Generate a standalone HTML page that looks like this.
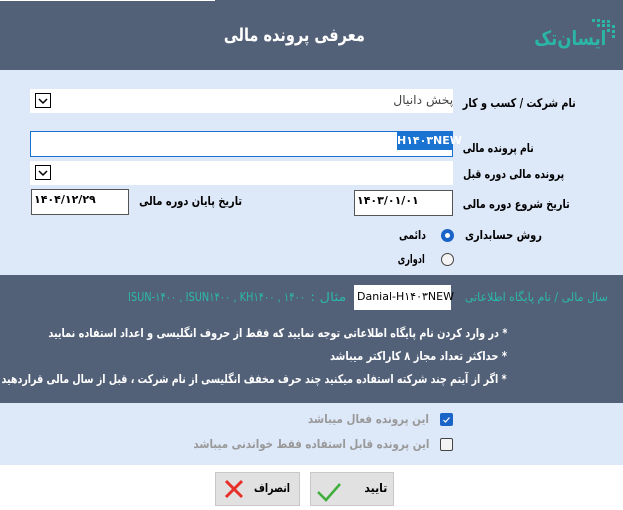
<!DOCTYPE html>
<html><head><meta charset="utf-8"><style>
*{margin:0;padding:0;box-sizing:border-box}
body{width:623px;height:510px;position:relative;background:#fff;font-family:"DejaVu Sans","Liberation Sans",sans-serif;overflow:hidden}
.a{position:absolute;white-space:nowrap}
.f{direction:rtl;text-align:right;font-size:12px;font-weight:bold;color:#000;line-height:16px}
.f>span{display:inline-block;transform-origin:right center}
.box{position:absolute;background:#fff}
.dd{position:absolute;width:16px;height:15px;border:1.5px solid #000;background:#fff}
</style></head><body>
<div class="a" style="left:0;top:0;width:623px;height:70px;background:#536178"></div>
<div class="a" style="left:0;top:0;width:215px;height:1px;background:#fff"></div>
<div class="a f" style="left:224px;top:25px;width:141px;color:#fff;font-size:18px;line-height:22px">معرفی پرونده مالی</div>
<svg class="a" style="left:530px;top:16px" width="90" height="40" viewBox="0 0 90 40">
<g fill="#2ab5a5"><rect x="62" y="3" width="3" height="3"/><rect x="67" y="3" width="3" height="3"/><rect x="72" y="4" width="3" height="3"/><rect x="77" y="4" width="3" height="3"/><rect x="67" y="8" width="3" height="3"/><rect x="72" y="8" width="3" height="3"/><rect x="77" y="8" width="3" height="3"/><rect x="82" y="9" width="3" height="3"/><rect x="77" y="13" width="3" height="3"/><rect x="82" y="14" width="3" height="3"/><rect x="82" y="19" width="3" height="3"/></g>
</svg>
<div class="a f" style="left:534px;top:26px;width:72px;color:#2ab5a5;font-size:20px;line-height:24px">ایسان‌تک</div>

<div class="a" style="left:0;top:70px;width:623px;height:205px;background:#dde8f9"></div>
<div class="a" style="left:0;top:403px;width:623px;height:62px;background:#dde8f9"></div>
<div class="a" style="left:0;top:275px;width:623px;height:128px;background:#536178"></div>

<div class="box" style="left:30px;top:89px;width:423px;height:24px"></div>
<div class="dd" style="left:35px;top:93px"></div>
<svg class="a" style="left:37px;top:96px" width="12" height="10"><path d="M2 3L6 7L10 3" fill="none" stroke="#000" stroke-width="1.5"/></svg>
<div class="a f" style="left:393px;top:92px;width:60px;font-weight:normal;color:#444">پخش دانیال</div>
<div class="a f" style="left:463px;top:95px;width:113px">نام شرکت / کسب و کار</div>

<div class="box" style="left:30px;top:131px;width:423px;height:26px;border:1px solid #1a73d0"></div>
<div class="a" style="left:397px;top:132px;width:56px;height:18px;background:#1a73d0;color:#fff;font-size:11px;font-weight:bold;text-align:center;line-height:18px">H۱۴۰۳NEW</div>
<div class="a f" style="left:463px;top:140px;width:71px">نام پرونده مالی</div>

<div class="box" style="left:30px;top:161px;width:423px;height:24px"></div>
<div class="dd" style="left:35px;top:165px"></div>
<svg class="a" style="left:37px;top:168px" width="12" height="10"><path d="M2 3L6 7L10 3" fill="none" stroke="#000" stroke-width="1.5"/></svg>
<div class="a f" style="left:463px;top:166px;width:101px">پرونده مالی دوره قبل</div>

<div class="box" style="left:354px;top:190px;width:99px;height:26px;border:1px solid #555"></div>
<div class="a" style="left:357px;top:194px;font-size:11px;font-weight:bold;direction:ltr">۱۴۰۳/۰۱/۰۱</div>
<div class="a f" style="left:463px;top:196px;width:107px">تاریخ شروع دوره مالی</div>
<div class="box" style="left:31px;top:189px;width:98px;height:26px;border:1px solid #555"></div>
<div class="a" style="left:34px;top:193px;font-size:11px;font-weight:bold;direction:ltr">۱۴۰۴/۱۲/۲۹</div>
<div class="a f" style="left:139px;top:193px;width:103px">تاریخ پایان دوره مالی</div>

<div class="a f" style="left:465px;top:227px;width:77px">روش حسابداری</div>
<div class="a" style="left:441px;top:229px;width:13px;height:13px;border-radius:50%;background:#1a64c8"></div>
<div class="a" style="left:445px;top:233px;width:5px;height:5px;border-radius:50%;background:#fff"></div>
<div class="a f" style="left:399px;top:227px;width:27px">دائمی</div>
<div class="a" style="left:441px;top:253px;width:13px;height:13px;border-radius:50%;background:#f4f4f4;border:1px solid #444"></div>
<div class="a f" style="left:398px;top:251px;width:27px">ادواری</div>

<div class="a f" style="left:465px;top:289px;width:143px;font-weight:normal;color:#2bb8a8">سال مالی / نام پایگاه اطلاعاتی</div>
<div class="box" style="left:354px;top:285px;width:97px;height:25px"></div>
<div class="a" style="left:357px;top:290px;font-size:11px;color:#000;direction:ltr">Danial-H۱۴۰۳NEW</div>
<div class="a f" style="left:310px;top:289px;width:36px;font-weight:normal;color:#2bb8a8">مثال :</div>
<svg class="a" style="left:128px;top:288px" width="180" height="18"><text x="0" y="13" textLength="177" lengthAdjust="spacingAndGlyphs" font-size="12" fill="#2bb8a8" font-family="DejaVu Sans" direction="ltr" unicode-bidi="embed">ISUN-۱۴۰۰ , ISUN۱۴۰۰ , KH۱۴۰۰ , ۱۴۰۰</text></svg>
<div class="a f" style="left:48px;top:325px;width:459px;color:#fff">* در وارد کردن نام پایگاه اطلاعاتی توجه نمایید که فقط از حروف انگلیسی و اعداد استفاده نمایید</div>
<div class="a f" style="left:330px;top:348px;width:177px;color:#fff">* حداکثر تعداد مجاز ۸ کاراکتر میباشد</div>
<div class="a f" style="left:2px;top:371px;width:505px;color:#fff">* اگر از آیتم چند شرکته استفاده میکنید چند حرف مخفف انگلیسی از نام شرکت ، قبل از سال مالی قراردهید</div>

<div class="a" style="left:440px;top:413px;width:13px;height:13px;border-radius:2px;background:#1a64c8"></div>
<svg class="a" style="left:440px;top:413px" width="13" height="13"><path d="M3.5 7L5.5 9L9.5 4.5" fill="none" stroke="#fff" stroke-width="1.2"/></svg>
<div class="a f" style="left:308px;top:411px;width:121px;color:#999">این پرونده فعال میباشد</div>
<div class="a" style="left:440px;top:438px;width:13px;height:13px;border-radius:2px;background:#f4f4f4;border:1px solid #444"></div>
<div class="a f" style="left:193px;top:436px;width:236px;color:#999">این پرونده قابل استفاده فقط خواندنی میباشد</div>

<div class="a" style="left:215px;top:472px;width:85px;height:34px;background:#e1e1e1;border:1px solid #c8c8c8"></div>
<svg class="a" style="left:223px;top:478px" width="22" height="22"><path d="M3 3L19 19M19 3L3 19" stroke="#e8302a" stroke-width="3"/></svg>
<div class="a f" style="left:254px;top:480px;width:36px">انصراف</div>
<div class="a" style="left:310px;top:472px;width:84px;height:34px;background:#e1e1e1;border:1px solid #c8c8c8"></div>
<svg class="a" style="left:316px;top:480px" width="26" height="24"><path d="M2 12L10 20L24 4" fill="none" stroke="#3fae3a" stroke-width="2.5"/></svg>
<div class="a f" style="left:364px;top:480px;width:23px">تایید</div>
<script>
document.querySelectorAll('.f').forEach(function(el){
 var w=parseFloat(el.style.width);
 el.innerHTML='<span>'+el.innerHTML+'</span>';
 var s=el.firstChild;var sw=s.getBoundingClientRect().width;
 if(sw>0)s.style.transform='scaleX('+(w/sw)+')';
});
</script>
</body></html>
